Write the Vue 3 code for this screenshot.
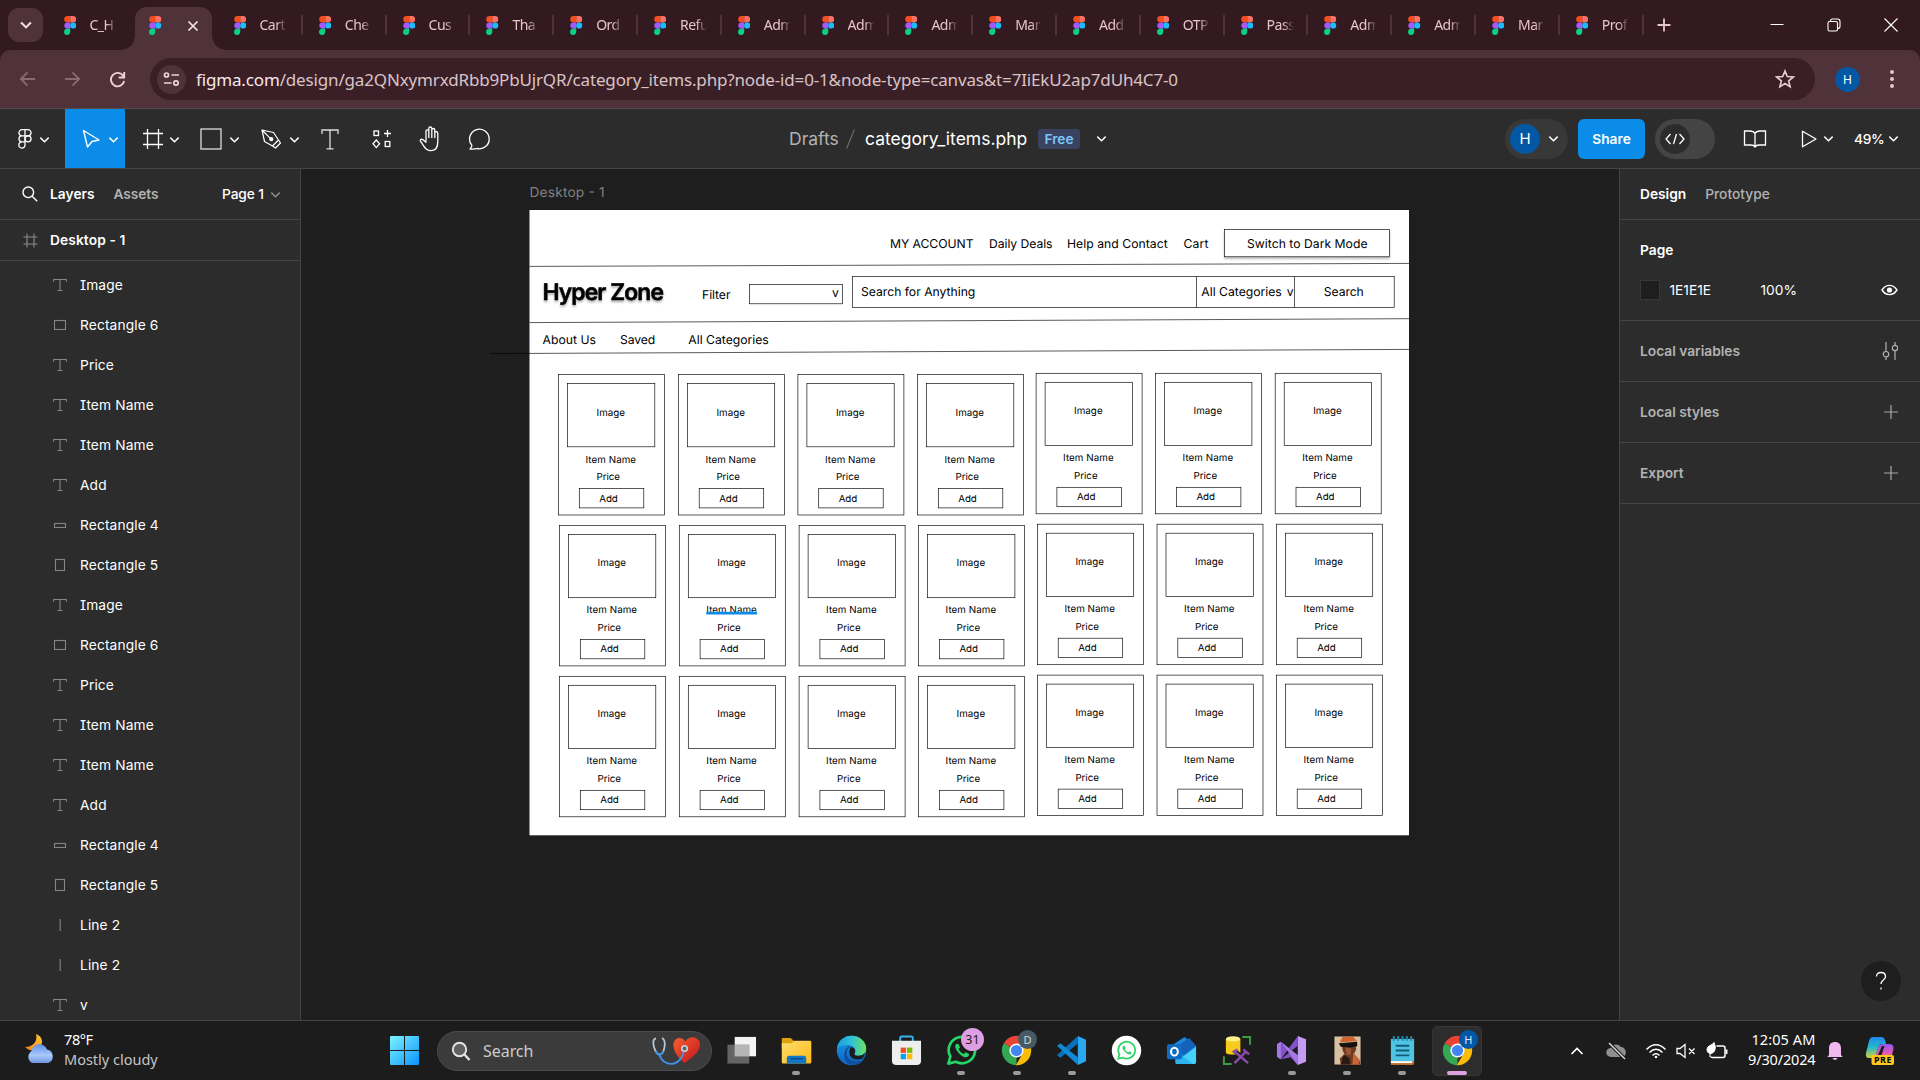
<script setup>
const tabs = ['Cart', 'Che', 'Cus', 'Tha', 'Ord', 'Refu', 'Adm', 'Adm', 'Adm', 'Mar', 'Add', 'OTP', 'Pass', 'Adm', 'Adm', 'Mar', 'Prof']

const layers = [
  ['text', 'Image'], ['wide', 'Rectangle 6'], ['text', 'Price'], ['text', 'Item Name'],
  ['text', 'Item Name'], ['text', 'Add'], ['flat', 'Rectangle 4'], ['tall', 'Rectangle 5'],
  ['text', 'Image'], ['wide', 'Rectangle 6'], ['text', 'Price'], ['text', 'Item Name'],
  ['text', 'Item Name'], ['text', 'Add'], ['flat', 'Rectangle 4'], ['tall', 'Rectangle 5'],
  ['line', 'Line 2'], ['line', 'Line 2'], ['text', 'v'],
]

// Node positions on the canvas, in screen pixels
const labels = [
  [890, 247.5, 83.5, 'MY ACCOUNT'], [989, 247.5, 63.5, 'Daily Deals'], [1067, 247.5, 100.7, 'Help and Contact'],
  [1183.5, 247.5, 25, 'Cart'], [1247, 247.5, 120.5, 'Switch to Dark Mode'], [702, 299.3, 28.5, 'Filter'],
  [832, 297, 6.5, 'v'], [861, 296.3, 114.3, 'Search for Anything'], [1201.3, 296.3, 80.5, 'All Categories'],
  [1286.8, 296.3, 6.5, 'v'], [1323.8, 296.3, 40, 'Search'], [542.5, 344.4, 53.5, 'About Us'],
  [620, 344.4, 35.3, 'Saved'], [688.3, 344.4, 80.5, 'All Categories'],
]

const firstRow = [558.5, 678.4, 797.9, 917.5, 1036.1, 1155.6, 1275.2]
const nextRows = [559.5, 679.3, 799.1, 918.6, 1037.4, 1157, 1276.4]
const cards = []
for (let r = 0; r < 3; r++) {
  for (let c = 0; c < 7; c++) {
    const left = (r ? nextRows : firstRow)[c]
    const top = [374.5, 525.4, 676.3][r] - (c > 3 ? 1.2 : 0)
    cards.push({ left, top, id: r * 7 + c })
  }
}

const apps = [
  { icon: 'taskview' }, { icon: 'folder', run: true }, { icon: 'edge' }, { icon: 'store' },
  { icon: 'whatsapp', run: true, badge: '31', kind: 'pink' }, { icon: 'chrome', run: true, badge: 'D', kind: 'slate' },
  { icon: 'vscode', run: true }, { icon: 'whatsapp2' }, { icon: 'outlook' }, { icon: 'dbtools' },
  { icon: 'vs', run: true }, { icon: 'photo', run: true }, { icon: 'notepad', run: true },
  { icon: 'chrome', active: true, badge: 'H', kind: 'navy' },
]
</script>

<template>
  <div class="screen">
    <svg class="defs" width="0" height="0">
      <defs>
        <linearGradient id="gwin" x1="0" y1="0" x2="1" y2="1"><stop offset="0" stop-color="#7df3ff" /><stop offset="1" stop-color="#0a93fb" /></linearGradient>
        <linearGradient id="gfold" x1="0" y1="0" x2="1" y2="1"><stop offset="0" stop-color="#ffdf70" /><stop offset="1" stop-color="#fdb813" /></linearGradient>
        <linearGradient id="gedge" x1="0" y1="0" x2="1" y2="0"><stop offset="0" stop-color="#1b9de2" /><stop offset=".5" stop-color="#2fc2d6" /><stop offset="1" stop-color="#6be35a" /></linearGradient>
        <linearGradient id="gedge2" x1="0" y1="0" x2="0" y2="1"><stop offset="0" stop-color="#1c9de4" /><stop offset="1" stop-color="#0b63c4" /></linearGradient>
        <linearGradient id="gcloud" x1="0" y1="0" x2="0" y2="1"><stop offset="0" stop-color="#5f8fe8" /><stop offset=".6" stop-color="#a9c9fb" /><stop offset="1" stop-color="#6e95df" /></linearGradient>
        <linearGradient id="gmoon" x1="1" y1="0" x2="0" y2="1"><stop offset="0" stop-color="#fbc83a" /><stop offset="1" stop-color="#f07f1c" /></linearGradient>
        <linearGradient id="gheart" x1="0" y1="0" x2="1" y2="1"><stop offset="0" stop-color="#f4602f" /><stop offset="1" stop-color="#c4121d" /></linearGradient>
        <linearGradient id="gcop1" x1="0" y1="0" x2="0" y2="1"><stop offset="0" stop-color="#1e88f0" /><stop offset=".5" stop-color="#27b9c8" /><stop offset="1" stop-color="#d8d13a" /></linearGradient>
        <linearGradient id="gcop2" x1="0" y1="0" x2="0" y2="1"><stop offset="0" stop-color="#8e5bf0" /><stop offset=".5" stop-color="#e056b8" /><stop offset="1" stop-color="#f88a5a" /></linearGradient>
      </defs>
      <symbol id="fav" viewBox="0 0 12 19">
        <path d="M3.2 0H6v6.4H3.2a3.2 3.2 0 0 1 0-6.4z" fill="#f24e1e" /><path d="M6 0h2.8a3.2 3.2 0 0 1 0 6.4H6z" fill="#ff7262" />
        <path d="M3.2 6.4H6v6.3H3.2a3.15 3.15 0 0 1 0-6.3z" fill="#a259ff" /><circle cx="9" cy="9.5" r="3.1" fill="#1abcfe" />
        <path d="M3.2 12.7H6v3.1a3.1 3.1 0 1 1-2.8-3.1z" fill="#0acf83" />
      </symbol>
      <symbol id="chev" viewBox="0 0 10 10"><path d="M1.2 3.3 5 7.1l3.8-3.8" fill="none" stroke="currentColor" stroke-width="1.3" /></symbol>
      <symbol id="i-taskview" viewBox="0 0 32 32"><rect x="9" y="2" width="22" height="20" fill="#f3f3f3" /><rect x="1.500" y="10" width="22.500" height="19.500" fill="#777" fill-opacity=".8" /><rect x="9" y="10" width="15" height="12" fill="#b5b5b5" /></symbol>
      <symbol id="i-folder" viewBox="0 0 32 32"><path d="M.8 4.2Q.8 3 2 3h8l3 3v7H.8z" fill="#e0a010" /><path d="M.8 8.500h10L13.500 6H30q1.300 0 1.300 1.300V28q0 1.300-1.300 1.300H2q-1.200 0-1.200-1.300z" fill="url(#gfold)" /><path d="M6 29.300V24q0-2.500 2.500-2.500h15Q26 21.500 26 24v5.300z" fill="#1377c9" /><path d="M9.500 24.500h13" stroke="#0b4e8e" stroke-width="1.500" /></symbol>
      <symbol id="i-edge" viewBox="0 0 32 32"><circle cx="16" cy="16" r="15.200" fill="url(#gedge2)" /><path d="M1 14C2 5.500 9 .8 16 .8c9 0 15.200 6.500 15.200 13 0 5-4 7.600-7.800 7.600-3.400 0-5-1.200-4.200-2.400 1.500-2 .9-7-4.200-8.200C10 9.500 4 11 1 14z" fill="url(#gedge)" /><path d="M11 19c0-3.500 2-6.800 5-8-5 .5-7.600 5.500-7.600 9.800 0 5 4 10 9.600 10.200 4.500 0 8.500-2.500 10.800-6-6 4-17.800 2-17.800-6z" fill="#0f4f9e" /><path d="M15.500 12.500c3.500 0 5.500 4 3.700 6.500-.8 1.300.8 2.400 4.200 2.400 2.500 0 5-.9 6.500-2.700-.5 2.500-1.200 4-2.300 5.500-5 2.500-13.500 1-13.900-5.700-.1-2 .4-4.500 1.800-6z" fill="#1c1c1c" /></symbol>
      <symbol id="i-store" viewBox="0 0 32 32"><path d="M9.500 8V3.200q0-1.700 1.700-1.700h9.600q1.700 0 1.700 1.700V8" fill="none" stroke="#35b6ec" stroke-width="2" /><path d="M1 6h30v20.500q0 4.500-4.500 4.500h-21Q1 31 1 26.500z" fill="#eee" /><path d="M10 13h5.500v5.500H10z" fill="#f25022" /><path d="M16.500 13H22v5.500h-5.500z" fill="#7fba00" /><path d="M10 19.500h5.500V25H10z" fill="#00a4ef" /><path d="M16.500 19.500H22V25h-5.500z" fill="#ffb900" /></symbol>
      <symbol id="i-whatsapp" viewBox="0 0 32 32"><path d="M2.500 29.500l2-7.300A13.600 13.600 0 1 1 10 27.600z" fill="none" stroke="#25d366" stroke-width="2.800" stroke-linejoin="round" /><path d="M11 9c-2 1-2 4 .5 7.500s6 6.500 9 6.500c2 0 3.500-1.800 3.300-3.500l-3.600-1.800-1.900 2c-2-.7-4.500-3-5.300-5.200l1.500-1.700-1.600-3.600z" fill="#25d366" /></symbol>
      <symbol id="i-whatsapp2" viewBox="0 0 32 32"><circle cx="16" cy="16" r="15.200" fill="#fff" /><path d="M7.500 24.500l1.200-4.400a8.700 8.700 0 1 1 3.300 3.200z" fill="none" stroke="#2bd468" stroke-width="1.800" /><path d="M12.800 11.300c-1.300.8-1.200 2.500.4 4.800s4 4.100 5.900 4.100c1.200 0 2.200-1.100 2.100-2.200l-2.300-1.200-1.200 1.300c-1.300-.5-2.900-1.900-3.400-3.300l1-1.100-1-2.300z" fill="#2bd468" /></symbol>
      <symbol id="i-chrome" viewBox="0 0 32 32"><path d="M16 16 2.840 8.400A15.200 15.200 0 0 1 29.160 8.400z" fill="#ea4335" /><path d="M16 16V31.200A15.200 15.200 0 0 1 2.840 8.400z" fill="#34a853" /><path d="M22 19.500 15.300 31.200C24 31.500 31 25 31.200 16c0-3-.7-5-1.600-7H16z" fill="#fbbc05" /><circle cx="16" cy="16" r="7.300" fill="#fff" /><circle cx="16" cy="16" r="5.800" fill="#4285f4" /></symbol>
      <symbol id="i-vscode" viewBox="0 0 32 32"><path d="M22.500 1 31 5v22l-8.500 4z" fill="#2aa9f0" /><path d="M22.500 1v8L4.500 23.500 1 21z" fill="#0a70bd" /><path d="M22.500 31v-8L4.500 8.500 1 11z" fill="#1089d6" /></symbol>
      <symbol id="i-outlook" viewBox="0 0 32 32"><path d="M7 10 19 2l12 9v17q0 2-2 2H10z" fill="#1a86dd" /><path d="M12 11 24 3l7 8-13 10z" fill="#1361b8" /><path d="M31 12v15q0 3-3 3H12q-2 0-2-2z" fill="#46d0f8" /><path d="M10 17l18 13H12q-2 0-2-2z" fill="#2eb2ef" /><rect x="1" y="9.500" width="15.500" height="15.500" rx="2" fill="#0f6cc4" /><ellipse cx="8.700" cy="17.200" rx="3.500" ry="4" fill="none" stroke="#fff" stroke-width="2.200" /></symbol>
      <symbol id="i-dbtools" viewBox="0 0 32 32"><path d="M22 2h8v8M3 22v8h8" fill="none" stroke="#3f9b45" stroke-width="2" /><path d="M5 4v14c0 3 15 3 15 0V4z" fill="#f6cb1c" /><ellipse cx="12.500" cy="4" rx="7.500" ry="2.800" fill="#fff08c" /><path d="m15 17 13 12M26 17 14 29" stroke="#1c1c1c" stroke-width="4.500" /><path d="m14 17 14 12M26 17 14 29M12 18l5-3M23 15l6 5" stroke="#884ca8" stroke-width="2.600" /></symbol>
      <symbol id="i-vs" viewBox="0 0 32 32"><path d="M22.500 1 31 4.500v23L22.500 31z" fill="#c39bf5" /><path d="M22.500 1v10L5 25l-4-2.500v-13L5 7l17.500 14v10L15 23 5 25z" fill="#8353c7" fill-rule="evenodd" /><path d="M5 7 1 9.500v13L5 25zM5 7l17.500 14v10z" fill="#a678e2" /></symbol>
      <symbol id="i-photo" viewBox="0 0 32 32"><path d="M1.500.500h29v31h-29z" fill="#1b1310" /><path d="M2.500 1.500h27v29h-27z" fill="#d8c0a2" /><path d="M10 9l14-1 1 7-3 6 6 4 1.500 5.500H9L8 24l5-4-2-4z" fill="#6e3a22" /><path d="M8 7.500 11 2h11l4 4.500z" fill="#d2622b" /><path d="M7 8.500l19-1.500v4.500l-7 1.500-10-1z" fill="#15110f" /><path d="M9 30.500 12 20l6 4 1 6.500z" fill="#2c1912" /><path d="M22 18l6 7v5.500h-7z" fill="#c6653a" /><path d="M14 13l6 1-1 7-4-1z" fill="#9a5732" /></symbol>
      <symbol id="i-notepad" viewBox="0 0 32 32"><path d="M4 4h24v24H4z" fill="#4fc3e4" /><path d="M4 27h24v2q0 2-2 2H4z" fill="#b86c2c" /><path d="M4 27h22v2H4z" fill="#fff" /><path d="M7 1v5M11.500 1v5M16 1v5M20.500 1v5M25 1v5" stroke="#2286a6" stroke-width="2" /><path d="M9 11h14M9 16h14M9 21h14" stroke="#155a76" stroke-width="2" /></symbol>
    </svg>

    <header class="tabstrip">
      <div class="tabsearch"><svg width="14" height="14" viewBox="0 0 10 10"><path d="M1.500 3.200 5 6.700l3.500-3.500" fill="none" stroke="#f1dfe2" stroke-width="1.500" /></svg></div>
      <div class="tab first"><svg class="fav"><use href="#fav" /></svg><span class="tabtext">C_H</span></div>
      <div class="tab active">
        <svg class="fav"><use href="#fav" /></svg>
        <svg class="x" width="12" height="12"><path d="M1.500 1.500l9 9M10.500 1.500l-9 9" stroke="#f4e3e6" stroke-width="1.700" /></svg>
      </div>
      <div v-for="(t, i) in tabs" :key="i" class="tab"><svg class="fav"><use href="#fav" /></svg><span class="tabtext">{{ t }}</span><i class="sep"></i></div>
      <svg class="newtab" width="14" height="14"><path d="M7 .5v13M.5 7h13" stroke="#e9c4ca" stroke-width="1.800" /></svg>
      <div class="winctl">
        <svg width="14" height="14"><path d="M.5 6.500h13" stroke="#fff" /></svg>
        <svg width="14" height="14" fill="none" stroke="#fff" stroke-width="1.100"><rect x="1" y="3.500" width="9.500" height="9.500" rx="1.500" /><path d="M3.500 3.500V3Q3.500 1 5.500 1h5Q13 1 13 3.500v5q0 2-2.500 2" /></svg>
        <svg width="14" height="14"><path d="M.5.500l13 13M13.500.500l-13 13" stroke="#fff" stroke-width="1.100" /></svg>
      </div>
    </header>

    <div class="addrwrap">
      <div class="addr">
        <svg class="nav" width="17" height="16" fill="none" stroke="#8a6a71" stroke-width="1.800"><path d="M16 8H2M8.500 1.300 1.800 8l6.700 6.700" /></svg>
        <svg class="nav" width="17" height="16" fill="none" stroke="#8a6a71" stroke-width="1.800"><path d="M1 8h14M8.500 1.300 15.200 8l-6.700 6.700" /></svg>
        <svg class="nav" width="17" height="17" fill="none" stroke="#f0cfd5" stroke-width="1.900"><path d="M14.300 5A6.700 6.700 0 1 0 15.200 10M15.200 1v5.500H9.700" /></svg>
        <div class="omni">
          <div class="tune"><svg width="17" height="16" fill="none" stroke="#ecd5d9" stroke-width="1.700"><circle cx="3.500" cy="4" r="2" /><path d="M8.500 4H16M1 12h7.500" /><circle cx="13" cy="12" r="2.200" /></svg></div>
          <span class="url"><b>figma.com</b>/design/ga2QNxymrxdRbb9PbUjrQR/category_items.php?node-id=0-1&amp;node-type=canvas&amp;t=7IiEkU2ap7dUh4C7-0</span>
          <svg class="star" width="20" height="20" fill="none" stroke="#e6c8cd" stroke-width="1.700"><path d="m10 2 2.300 5.500 6 .5-4.600 3.900 1.400 5.900L10 14.600l-5.100 3.200 1.400-5.900L1.700 8l6-.500z" /></svg>
        </div>
        <span class="me">H</span>
        <svg class="dots" width="6" height="20" fill="#e9c4ca"><circle cx="3" cy="3" r="2" /><circle cx="3" cy="10" r="2" /><circle cx="3" cy="17" r="2" /></svg>
      </div>
    </div>

    <div class="toolbar">
      <div class="tools">
        <div class="tool logo">
          <svg width="14" height="20" fill="none" stroke="#fff" stroke-width="1.300"><path d="M7 .700H4a3.050 3.050 0 0 0 0 6.100h3zM7 .700h3a3.050 3.050 0 0 1 0 6.100H7zM7 6.800H4a3.050 3.050 0 0 0 0 6.100h3zM7 12.900H4A3.100 3.100 0 1 0 7 16z" /><circle cx="10" cy="9.850" r="3.050" /></svg>
          <svg class="c"><use href="#chev" /></svg>
        </div>
        <div class="tool blue">
          <svg width="18" height="20" fill="none" stroke="#fff" stroke-width="1.400" stroke-linejoin="round"><path d="M1.500 1.500 17 11l-7 1.500-4.500 5.500z" /></svg>
          <svg class="c"><use href="#chev" /></svg>
        </div>
        <div class="tool frame"><svg width="22" height="22" stroke="#fff" stroke-width="1.300"><path d="M5.500 1v20M16.500 1v20M1 5.500h20M1 16.500h20" /></svg><svg class="c"><use href="#chev" /></svg></div>
        <div class="tool rect"><svg width="22" height="22" fill="none" stroke="#dcdcdc" stroke-width="1.300"><rect x="1" y="1" width="20" height="20" /></svg><svg class="c"><use href="#chev" /></svg></div>
        <div class="tool pen"><svg width="22" height="22" fill="none" stroke="#fff" stroke-width="1.200" stroke-linejoin="round"><path d="M2 2 13.500 4.500 18.500 12l-6 6-8-4.500zM2 2l8.300 8.300M18.500 12l2 3-5 5-3-2" /><circle cx="11.300" cy="11.200" r="1.500" fill="#fff" /></svg><svg class="c"><use href="#chev" /></svg></div>
        <div class="tool type"><svg width="18" height="21" fill="none" stroke="#ddd" stroke-width="1.300"><path d="M1 5V1h16v4M9 1v18.800M5.500 19.800h7" /></svg></div>
        <div class="tool res"><svg width="20" height="20" fill="none" stroke="#fff" stroke-width="1.300"><rect x="2" y="2" width="4.500" height="4.500" /><path d="M15.500 1v7M12 4.500h7M4.300 11l3.300 3.800-3.300 3.800L1 14.800z" /><rect x="13.200" y="12.500" width="4.600" height="5" /></svg></div>
        <div class="tool hand"><svg width="23" height="26" fill="none" stroke="#fff" stroke-width="1.300" stroke-linecap="round" stroke-linejoin="round"><path d="M7 15V5.300q0-1.500 1.400-1.500t1.400 1.500V2.500Q9.800 1 11.300 1t1.500 1.500v1.300q0-1.300 1.500-1.300t1.500 1.500v3q0-1.300 1.500-1.300t1.500 1.500v8c0 6-1.500 9.500-7 9.500-4 0-5.500-2-7-4.500l-3.300-5C.5 14 2.500 12.500 4 13.800L7 16.300M9.800 5v6.500M12.800 3.500v8M15.800 6v5.500" /></svg></div>
        <div class="tool comment"><svg width="24" height="22" fill="none" stroke="#fff" stroke-width="1.300" stroke-linejoin="round"><path d="M2 21c1.300-1.300 2-2.500 1.800-3.800A9.800 9.800 0 1 1 9 20.500q-1.500.700-7 .5z" /></svg></div>
      </div>
      <div class="title">
        <span class="drafts">Drafts</span>
        <svg width="9" height="20"><path d="M8.300.500.700 19.500" stroke="#6a6a6a" stroke-width="1.200" /></svg>
        <span class="file">category_items.php</span><span class="free">Free</span>
        <svg class="c"><use href="#chev" /></svg>
      </div>
      <div class="actions">
        <div class="user"><span class="me big">H</span><svg class="c"><use href="#chev" /></svg></div>
        <div class="share">Share</div>
        <div class="toggle"><span><svg width="20" height="14" fill="none" stroke="#fff" stroke-width="1.300"><path d="M5.500 2 1 7l4.500 5M14.500 2 19 7l-4.500 5M11.500 2l-3 10" /></svg></span></div>
        <svg class="book" width="24" height="18" fill="none" stroke="#fff" stroke-width="1.300"><path d="M12 3.500Q10.500 1 7 1H1.500v14H8q3 0 4 2 1-2 4-2h6.500V1H17q-3.500 0-5 2.500zV17" /></svg>
        <svg class="play" width="16" height="18" fill="none" stroke="#fff" stroke-width="1.300" stroke-linejoin="round"><path d="M1.500 1.200 15 9 1.500 16.800z" /></svg>
        <svg class="c"><use href="#chev" /></svg>
        <span class="zoom">49%</span>
        <svg class="c"><use href="#chev" /></svg>
      </div>
    </div>

    <main class="work">
      <aside class="left">
        <div class="lhead">
          <svg width="16" height="16" fill="none" stroke="#fff" stroke-width="1.400"><circle cx="6.300" cy="6.300" r="5.300" /><path d="m10.200 10.200 5 5" /></svg>
          <b>Layers</b><b class="dim">Assets</b><span class="pg">Page 1</span><svg class="c grey"><use href="#chev" /></svg>
        </div>
        <div class="lframe"><svg width="15" height="15" stroke="#8c8c8c" stroke-width="1.100"><path d="M4 .500v14M11 .500v14M.5 4h14M.5 11h14" /></svg><b>Desktop - 1</b></div>
        <ul>
          <li v-for="([kind, name], i) in layers" :key="i">
            <svg width="14" height="14" fill="none" stroke="#858585" stroke-width="1.100">
              <path v-if="kind === 'text'" d="M.6 3.800V1.500h12.800v2.300M7 1.500v11M4.500 12.500h5" />
              <rect v-else-if="kind === 'wide'" x="1.500" y="2.500" width="11" height="9" />
              <rect v-else-if="kind === 'flat'" x="1.500" y="5.500" width="11" height="4" />
              <rect v-else-if="kind === 'tall'" x="2.500" y="1.500" width="9" height="11" />
              <path v-else d="M7.200 1v12" />
            </svg>
            <span>{{ name }}</span>
          </li>
        </ul>
      </aside>

      <section class="canvas">
        <svg class="board" width="1318" height="851" viewBox="301 169 1318 851" font-family="Inter, sans-serif">
          <text x="529.500" y="197" font-size="13.750" fill="#808080" textLength="75">Desktop - 1</text>
          <rect x="529.500" y="210" width="879.500" height="625.300" fill="#fff" />
          <g fill="none" stroke="#000" stroke-width=".65">
            <path d="M529.500 266.400 1409 263.400M529.500 322.600 1409 318.700M490.500 353.600 1409 349.400" />
            <rect x="1224.500" y="229.500" width="165" height="27.300" fill="#fff" class="raised" />
            <rect x="749.500" y="284.500" width="93" height="19.300" />
            <rect x="852.500" y="276.500" width="541.700" height="31" />
            <path d="M1196.500 276.500v31M1294.500 276.500v31" />
          </g>
          <g font-size="12.200" fill="#000">
            <text v-for="([x, y, w, t], i) in labels" :key="i" :x="x" :y="y" :textLength="w">{{ t }}</text>
          </g>
          <text class="brand" x="542.500" y="300.300" font-size="22.900" font-weight="600" textLength="121.500" stroke="#000" stroke-width=".5">Hyper Zone</text>
          <g v-for="c in cards" :key="c.id" :transform="`translate(${c.left} ${c.top})`" font-size="9.780">
            <g fill="none" stroke="#000" stroke-width=".65"><rect width="106" height="140.500" /><rect x="9" y="9" width="87.300" height="63.300" /><rect x="20.800" y="114" width="64.500" height="19.400" /></g>
            <text x="38" y="41" textLength="28.500">Image</text>
            <text x="27" y="88" textLength="50.500">Item Name</text>
            <text x="38" y="105.700" textLength="23.500">Price</text>
            <text x="40.800" y="127" textLength="18.500">Add</text>
          </g>
          <rect x="706.300" y="611.800" width="50.700" height="2.700" fill="#0c8ce9" />
        </svg>
      </section>

      <aside class="right">
        <div class="sec heads"><b>Design</b><b class="dim">Prototype</b></div>
        <div class="sec page">
          <b>Page</b>
          <div class="color"><i></i><span class="hex">1E1E1E</span><span>100%</span><svg width="17" height="12" fill="none" stroke="#fff" stroke-width="1.400"><path d="M1 6q3-4.600 7.500-4.600T16 6q-3 4.600-7.500 4.600T1 6z" /><circle cx="8.500" cy="6" r="2.600" fill="#fff" stroke="none" /></svg></div>
        </div>
        <div class="sec row"><b class="dim">Local variables</b><svg width="16" height="18" fill="none" stroke="#b3b3b3" stroke-width="1.200"><path d="M4 0v9.500M4 15v3M13 0v3.300M13 8.800V18" /><circle cx="4" cy="12.200" r="2.700" /><circle cx="13" cy="6" r="2.700" /></svg></div>
        <div v-for="n in ['Local styles', 'Export']" :key="n" class="sec row"><b class="dim">{{ n }}</b><svg width="14" height="14" stroke="#a8a8a8" stroke-width="1.200"><path d="M7 0v14M0 7h14" /></svg></div>
        <div class="help"><svg width="12" height="20" fill="none" stroke="#fff" stroke-width="1.300"><path d="M1.500 5.500C1.500 2.800 3.200 1.500 6 1.500s4.500 1.500 4.500 4c0 3.500-4.500 3.500-4.500 7.500M6 16.500v2" /></svg></div>
      </aside>
    </main>

    <footer class="taskbar">
      <div class="weather">
        <svg width="32" height="32"><path d="M12 1c6 2 8 8 4 13-4 4.500-10 5-15 0C9 14 14 8 12 1z" fill="url(#gmoon)" /><path d="M8 30a7 7 0 0 1-.5-12C9 12 16 9 21 13.500c1 .8 1.500 2 2 3A7 7 0 0 1 24 30z" fill="url(#gcloud)" /></svg>
        <div class="wtext"><span>78°F</span><span>Mostly cloudy</span></div>
      </div>
      <svg class="start" width="29" height="29"><path d="M0 1q0-1 1-1h13v14H0zM15 0h13q1 0 1 1v13H15zM0 15h14v14H1q-1 0-1-1zM15 15h14v13q0 1-1 1H15z" fill="url(#gwin)" /></svg>
      <div class="search">
        <svg width="20" height="20" fill="none" stroke="#e4e4e4"><circle cx="8.500" cy="8.500" r="6.700" fill="#606060" stroke-width="1.900" /><path d="m13.500 13.500 5 5.500" stroke-width="2.400" /></svg>
        <span>Search</span>
        <svg class="health" width="50" height="30"><path d="M33 27C26 22 21 15 21.500 8.500 22 1 30 0 33.500 5.500 37-.500 46 0 48 7c1.500 8-8 14-15 20z" fill="url(#gheart)" /><path d="M4 2.500C0 3 1 10 3.500 15c2.500 4.500 6 5 8 0 1.500-4 2.500-11-1.500-13" fill="none" stroke="#b7c5d3" stroke-width="1.800" /><path d="M3.500 15c2.500 5 6 5 8 0M7.500 18.500C9 25 15 29 22 27.500 28 26 31 20 32.500 13.500" fill="none" stroke="#3f92e0" stroke-width="1.900" /><circle cx="32.500" cy="12.500" r="3.500" fill="#cfd4da" /><circle cx="32.500" cy="12.500" r="1.900" fill="#59616c" /></svg>
      </div>
      <div class="apps">
        <div v-for="(a, i) in apps" :key="i" class="app" :class="{ active: a.active }">
          <svg width="31" height="31"><use :href="'#i-' + a.icon" /></svg>
          <span v-if="a.badge" class="badge" :class="a.kind">{{ a.badge }}</span>
          <i v-if="a.run || a.active" class="run"></i>
        </div>
      </div>
      <div class="tray">
        <svg width="14" height="10" fill="none" stroke="#fff" stroke-width="1.700"><path d="m1.500 8 5.500-5.500L12.500 8" /></svg>
        <svg class="onecloud" width="22" height="18"><path d="M5 15a4.500 4.500 0 0 1-.5-9C6 2 12 1 15 5c5 0 7 8 2 10z" fill="#8f8f8f" /><path d="m3 1 16 16" stroke="#1c1c1c" stroke-width="3.500" /><path d="m3 1 16 16" stroke="#ddd" stroke-width="1.400" /></svg>
        <svg class="wifi" width="22" height="16" fill="none" stroke="#fff" stroke-width="1.500"><path d="M1.500 6.500q9.500-9.500 19 0M4.500 9.500q6.500-6.500 13 0M7.500 12.500q3.500-3.500 7 0" /><circle cx="11" cy="14" r="1.300" fill="#fff" stroke="none" /></svg>
        <svg class="vol" width="20" height="16" fill="none" stroke="#fff" stroke-width="1.300"><path d="M1 5.500h3L9 1.500v13l-5-4H1zM13 5.500l5.500 5.500M18.500 5.500 13 11" /></svg>
        <svg class="bat" width="22" height="18" fill="none" stroke="#fff" stroke-width="1.500"><path d="M10.500 4H17q2 0 2 2v7.500q0 2-2 2H6.500q-1.500 0-2-1M20.700 7.500v4.500" /><path d="M8 .5q2.500 5 .5 8.500-1.800 3-4.700 2.500Q.5 10.500 1 7q.5-2.500 3-3.500Q7 2.500 8 .5zM4 10v5" fill="#fff" stroke-width="1" /></svg>
        <div class="clock"><span>12:05 AM</span><span>9/30/2024</span></div>
        <svg class="bell" width="18" height="20" fill="#efb9f1"><path d="M3 14V7.500C3 3 5.500 1 9 1s6 2 6 6.500V14l1.800 2H1.200zM6.500 17h5q-.8 2-2.500 2t-2.500-2z" /></svg>
        <svg class="copilot" width="30" height="30"><path d="M8 1h9q2 0 3 3l1 4h-4q-3 0-4 4l-2 7q-1 3-4 3H4q-4 0-3-5L4 5q1-4 4-4z" fill="url(#gcop1)" /><path d="M18 8h6q5 0 4.500 5l-2 8q-1 4-4 4H12q-3 0-2-3l3-10q1-4 5-4z" fill="url(#gcop2)" /><path d="M17 10h2.500l-3 9H13z" fill="#1c1c1c" /><rect x="6.500" y="19" width="22.500" height="10" rx="2" fill="#ffc81e" /><text x="9" y="27.300" font-family="Noto Sans, sans-serif" font-weight="700" font-size="9" textLength="17.500">PRE</text></svg>
      </div>
    </footer>
  </div>
</template>

<style>
body { margin: 0; background: #1e1e1e; }
</style>

<style scoped>
* { box-sizing: border-box; }
.screen { width: 1920px; height: 1080px; overflow: hidden; display: flex; flex-direction: column; font-family: Inter, sans-serif; font-size: 13.75px; color: #fff; background: #1e1e1e; }
.screen svg { flex: none; display: block; }
.defs { height: 0; }
svg.c { width: 11px; height: 11px; color: #fff; }
svg.c.grey { color: #8c8c8c; }

.tabstrip { height: 50px; flex: none; background: #321a20; display: flex; align-items: center; padding-left: 8px; font-family: "Noto Sans", sans-serif; }
.tabsearch { width: 35px; height: 34px; border-radius: 11px; background: #50333a; display: flex; align-items: center; justify-content: center; flex: none; }
.tab { width: 83.8px; height: 50px; flex: none; display: flex; align-items: center; position: relative; padding-left: 17px; }
.fav { width: 12.5px; height: 19px; }
.tab.first { width: 92px; padding-left: 20.5px; }
.tab.active { width: 77px; height: 43px; align-self: flex-end; background: #50333a; border-radius: 12px 12px 0 0; padding: 0 13.5px 7px 14px; justify-content: space-between; margin-right: 4.5px; }
.tab.active + .tab { width: 85.3px; }
.tab.active .x { margin-top: 1px; }
.tab.active::before, .tab.active::after { content: ""; position: absolute; bottom: 0; width: 14px; height: 14px; }
.tab.active::before { left: -14px; background: radial-gradient(circle at 0 0, transparent 13.5px, #50333a 14px); }
.tab.active::after { right: -14px; background: radial-gradient(circle at 100% 0, transparent 13.5px, #50333a 14px); }
.tabtext { margin-left: 13.5px; white-space: nowrap; width: 27px; height: 24px; line-height: 24px; font-size: 14px; letter-spacing: -.5px; color: #e9c4ca; -webkit-mask-image: linear-gradient(90deg, #000 60%, transparent); mask-image: linear-gradient(90deg, #000 60%, transparent); }
.sep { position: absolute; right: -1px; top: 15px; width: 2px; height: 20px; background: #50333a; }
.newtab { margin-left: 14px; }
.winctl { margin-left: auto; display: flex; gap: 43px; padding-right: 22px; }

.addrwrap { background: #321a20; flex: none; }
.addr { height: 59px; background: #50333a; border-radius: 10px 10px 0 0; border-bottom: 1px solid #554a4c; display: flex; align-items: center; padding-left: 19px; }
.nav { margin-right: 28px; }
.nav + .nav + .nav { margin-right: 24px; }
.omni { width: 1665px; height: 42px; border-radius: 21px; background: #3a2026; display: flex; align-items: center; padding-left: 7px; flex: none; }
.tune { width: 29px; height: 29px; border-radius: 50%; background: #50333a; display: flex; align-items: center; justify-content: center; }
.url { margin-left: 10px; width: 1020px; white-space: nowrap; font-family: "Noto Sans", sans-serif; font-size: 17px; letter-spacing: -.155px; color: #d9c3c7; }
.url b { font-weight: 400; color: #f7e8ea; }
.star { margin-left: auto; margin-right: 20px; }
.me { width: 25px; height: 25px; border-radius: 50%; background: #0258a5; margin-left: 20px; display: flex; align-items: center; justify-content: center; font-family: "Noto Sans", sans-serif; font-size: 12px; color: #fff; flex: none; }
.dots { margin-left: 29px; }

.toolbar { height: 60px; flex: none; background: #2c2c2c; border-bottom: 1px solid #444; display: flex; }
.tools { display: flex; width: 789px; }
.tool { height: 59px; display: flex; align-items: center; gap: 7px; padding-top: 1px; }
.logo { width: 65px; padding-left: 18px; }
.blue { width: 60px; background: #0c8ce9; padding-left: 17px; gap: 8px; }
.frame { width: 75px; padding-left: 17px; gap: 5px; }
.rect { width: 60px; gap: 6.5px; }
.pen { width: 60px; gap: 6.5px; }
.type { width: 51.5px; padding-left: .5px; }
.res { width: 47.5px; }
.hand { width: 49px; }
.title { display: flex; align-items: center; font-size: 17.5px; width: 716px; }
.drafts { width: 50px; color: #b3b3b3; margin-right: 7px; }
.file { margin-left: 10px; width: 163px; white-space: nowrap; }
.free { margin-left: 10px; width: 42px; height: 20px; border-radius: 3px; background: #394360; color: #7cc4f8; font-size: 13.75px; font-weight: 600; display: flex; align-items: center; justify-content: center; }
.title .c { margin-left: 15.5px; }
.actions { display: flex; align-items: center; }
.user { width: 63px; height: 40px; border-radius: 20px; background: #383838; display: flex; align-items: center; padding-left: 5px; gap: 8px; }
.me.big { width: 30px; height: 30px; margin: 0; font-size: 15px; font-family: Inter, sans-serif; }
.share { margin-left: 10px; width: 67px; height: 40px; border-radius: 6px; background: #0c8ce9; font-weight: 600; display: flex; align-items: center; justify-content: center; }
.toggle { margin-left: 10px; width: 60px; height: 40px; border-radius: 20px; background: #444; display: flex; align-items: center; padding-left: 5px; }
.toggle span { width: 30px; height: 30px; border-radius: 50%; background: #2c2c2c; display: flex; align-items: center; justify-content: center; }
.book { margin-left: 27.5px; }
.play { margin-left: 34px; }
.play + .c { margin-left: 6.5px; }
.zoom { margin-left: 20px; width: 29px; font-weight: 500; letter-spacing: -.3px; }
.zoom + .c { margin-left: 4.5px; }

.work { height: 851px; flex: none; display: flex; }
b { font-weight: 600; }
.dim { color: #b3b3b3; }
.left { width: 301px; border-right: 1px solid #444; background: #2c2c2c; font-feature-settings: "cv08"; overflow: hidden; }
.lhead { height: 51px; border-bottom: 1px solid #444; display: flex; align-items: center; padding-left: 22px; }
.lhead b { margin-left: 12px; width: 45px; letter-spacing: .05px; }
.lhead b.dim { margin-left: 18.5px; width: 46px; letter-spacing: -.1px; }
.pg { margin-left: 62.5px; width: 43px; font-weight: 500; white-space: nowrap; letter-spacing: -.1px; }
.lhead .c { margin-left: 4.5px; }
.lframe { height: 41px; border-bottom: 1px solid #444; display: flex; align-items: center; padding-left: 23px; gap: 12px; letter-spacing: .1px; }
ul { list-style: none; margin: 4px 0 0; padding: 0; }
li { height: 40px; display: flex; align-items: center; gap: 13px; padding-left: 53px; letter-spacing: .12px; }
.canvas { width: 1318px; overflow: hidden; }
.board text { text-rendering: geometricPrecision; }
.brand { filter: drop-shadow(0 2.4px 1.2px rgba(0, 0, 0, .3)); }
.raised { filter: drop-shadow(0 2.4px 1.2px rgba(0, 0, 0, .25)); }

.right { width: 301px; border-left: 1px solid #444; background: #2c2c2c; display: flex; flex-direction: column; }
.sec { border-bottom: 1px solid #444; padding: 0 22px 0 20px; flex: none; }
.heads { height: 51px; display: flex; align-items: center; gap: 19px; }
.heads .dim { font-weight: 500; }
.page { height: 101px; padding-top: 20px; line-height: 20px; }
.color { display: flex; align-items: center; margin-top: 20px; height: 20px; }
.color i { width: 20px; height: 20px; background: #1e1e1e; border: 1px solid #373737; }
.hex { margin-left: 9.5px; width: 91px; }
.color svg { margin-left: auto; }
.row { height: 61px; display: flex; align-items: center; justify-content: space-between; }
.help { width: 40px; height: 40px; border-radius: 50%; background: #1e1e1e; margin: auto 19px 19px auto; display: flex; align-items: center; justify-content: center; }

.taskbar { height: 60px; flex: none; border-top: 1px solid #444; background: #1c1c1c; display: flex; align-items: center; font-family: "Noto Sans", sans-serif; font-size: 14.5px; }
.weather { width: 390px; padding-left: 24px; display: flex; align-items: center; gap: 8px; }
.weather svg { margin-top: -4px; }
.wtext { display: flex; flex-direction: column; line-height: 20px; color: #c4c4c4; margin-top: -4px; }
.wtext span:first-child { color: #fff; letter-spacing: -.4px; }
.search { margin-left: 18px; width: 275px; height: 40px; border-radius: 20px; background: #3b3b3b; border: 1px solid #4c4c4c; display: flex; align-items: center; padding: 0 9px 0 13px; flex: none; }
.search span { margin-left: 12px; font-size: 16px; letter-spacing: -.05px; color: #ccc; }
.health { margin-left: auto; }
.apps { display: flex; margin-left: 1.5px; }
.app { width: 55.1px; height: 50px; flex: none; position: relative; display: flex; align-items: center; justify-content: center; }
.app.active::before { content: ""; position: absolute; inset: 0 2.5px; border-radius: 5px; background: #2d2d2d; border: 1px solid #363636; }
.app > svg { position: relative; }
.run { position: absolute; bottom: 1px; width: 8px; height: 4px; border-radius: 2px; background: #9a9a9a; }
.active .run { width: 20px; background: #dba2df; }
.badge { position: absolute; right: 7px; top: 4px; width: 19px; height: 19px; border-radius: 50%; font-size: 11px; display: flex; align-items: center; justify-content: center; }
.pink { width: 23px; height: 23px; right: 5px; top: 2px; background: #dd9fe2; color: #1c1c1c; font-size: 12.5px; }
.slate { background: #455a64; color: #cfd8dc; }
.navy { background: #0258a5; color: #d7e9fa; }
.tray { display: flex; align-items: center; margin-left: auto; padding-right: 25px; }
.onecloud { margin-left: 22px; }
.wifi { margin-left: 17px; }
.vol { margin-left: 9.5px; }
.bat { margin-left: 9.5px; }
.clock { width: 88px; line-height: 20px; text-align: right; display: flex; flex-direction: column; margin-top: -4px; }
.clock span:first-child { letter-spacing: .1px; }
.clock span:last-child { letter-spacing: -.15px; }
.bell { margin-left: 10px; }
.copilot { margin-left: 21.5px; }
</style>
